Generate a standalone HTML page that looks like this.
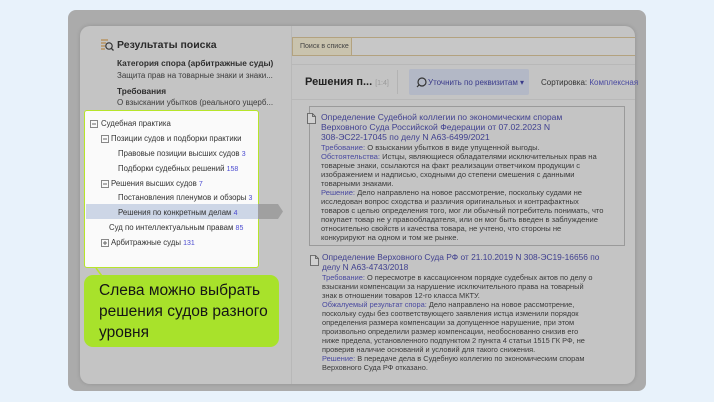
<!DOCTYPE html>
<html><head><meta charset="utf-8"><style>
*{margin:0;padding:0;box-sizing:border-box}
body{width:714px;height:402px;background:#e8f2fb;position:relative;overflow:hidden;font-family:"Liberation Sans",sans-serif}
.a{position:absolute;white-space:nowrap}
.ov{left:68px;top:10px;width:578px;height:381px;background:#ababab;border-radius:8px}
.win{left:80px;top:26px;width:555px;height:358px;background:#c4c4c4;border-radius:10px;box-shadow:0 0 4px rgba(0,0,0,.15)}
.s{font-size:7.8px;color:#3c3c3c}
.l{color:#4a4aa0}
.rt{color:#3a3a3a}
.t{font-size:8.6px;color:#3f3f8f;line-height:9.8px}
</style></head><body>
<div class="a ov"></div>
<div class="a win"></div>
<svg class="a" style="left:100px;top:38px" width="14" height="14"><g stroke="#b5894a" stroke-width="1.2"><line x1="1" y1="2" x2="8" y2="2"/><line x1="1" y1="5" x2="6" y2="5"/><line x1="1" y1="8" x2="5" y2="8"/><line x1="1" y1="11" x2="5" y2="11"/></g><circle cx="9" cy="8" r="3.2" fill="none" stroke="#333" stroke-width="1.2"/><line x1="11.3" y1="10.3" x2="13.5" y2="12.5" stroke="#333" stroke-width="1.3"/></svg>
<div class="a" style="left:117px;top:39px;font-size:10.5px;font-weight:bold;color:#2a2a2a">Результаты поиска</div>
<div class="a" style="left:117px;top:58px;font-size:8.3px;font-weight:bold;color:#2e2e2e">Категория спора (арбитражные суды)</div>
<div class="a s" style="left:117px;top:71px;font-size:8px">Защита прав на товарные знаки и знаки...</div>
<div class="a" style="left:117px;top:86px;font-size:8.3px;font-weight:bold;color:#2e2e2e">Требования</div>
<div class="a s" style="left:117px;top:98px;font-size:8px">О взыскании убытков (реального ущерб...</div>
<div class="a" style="left:84px;top:110px;width:175px;height:158px;background:#fafafa;border:1.5px solid #b7e52a;border-radius:3px"></div>
<div class="a" style="left:86px;top:204px;width:172px;height:15px;background:#cdd6e6"></div>
<svg class="a" style="left:258px;top:204px" width="26" height="15"><polygon points="0,0 20,0 25,7.5 20,15 0,15" fill="#a0a0a0"/></svg>
<svg class="a" style="left:90px;top:120px" width="8" height="8"><rect x=".5" y=".5" width="7" height="7" fill="none" stroke="#888"/><line x1="2" y1="4" x2="6" y2="4" stroke="#666"/></svg>
<div class="a s" style="left:101px;top:119px;color:#333">Судебная практика</div>
<svg class="a" style="left:101px;top:135px" width="8" height="8"><rect x=".5" y=".5" width="7" height="7" fill="none" stroke="#888"/><line x1="2" y1="4" x2="6" y2="4" stroke="#666"/></svg>
<div class="a s" style="left:111px;top:134px;color:#333">Позиции судов и подборки практики</div>
<div class="a s" style="left:118px;top:149px;color:#333">Правовые позиции высших судов <span style="color:#4b4bd0;font-size:7px">3</span></div>
<div class="a s" style="left:118px;top:164px;color:#333">Подборки судебных решений <span style="color:#4b4bd0;font-size:7px">158</span></div>
<svg class="a" style="left:101px;top:180px" width="8" height="8"><rect x=".5" y=".5" width="7" height="7" fill="none" stroke="#888"/><line x1="2" y1="4" x2="6" y2="4" stroke="#666"/></svg>
<div class="a s" style="left:111px;top:179px;color:#333">Решения высших судов <span style="color:#4b4bd0;font-size:7px">7</span></div>
<div class="a s" style="left:118px;top:193px;color:#333">Постановления пленумов и обзоры <span style="color:#4b4bd0;font-size:7px">3</span></div>
<div class="a s" style="left:118px;top:208px;color:#333">Решения по конкретным делам <span style="color:#4b4bd0;font-size:7px">4</span></div>
<div class="a s" style="left:109px;top:223px;color:#333">Суд по интеллектуальным правам <span style="color:#4b4bd0;font-size:7px">85</span></div>
<svg class="a" style="left:101px;top:239px" width="8" height="8"><rect x=".5" y=".5" width="7" height="7" fill="none" stroke="#888"/><line x1="2" y1="4" x2="6" y2="4" stroke="#666"/><line x1="4" y1="2" x2="4" y2="6" stroke="#666"/></svg>
<div class="a s" style="left:111px;top:238px;color:#333">Арбитражные суды <span style="color:#4b4bd0;font-size:7px">131</span></div>
<svg class="a" style="left:95px;top:268px" width="20" height="12"><line x1="1" y1="0" x2="10" y2="12" stroke="#b7e52a" stroke-width="1.5"/></svg>
<div class="a" style="left:84px;top:275px;width:195px;height:72px;background:#a8e22b;border-radius:9px"></div>
<div class="a" style="left:99px;top:280px;font-size:15.5px;line-height:21px;color:#151515">Слева можно выбрать<br>решения судов разного<br>уровня</div>
<div class="a" style="left:291px;top:26px;width:1px;height:358px;background:#b8b8b8"></div>
<div class="a" style="left:292px;top:37px;width:343px;height:19px;border-top:1px solid #b3a27f;border-bottom:1px solid #b3a27f;background:#c7c7c7"></div>
<div class="a" style="left:292px;top:37px;width:60px;height:19px;background:#c9c3ae;border:1px solid #b3a27f;font-size:7px;color:#444;padding:5px 0 0 7px">Поиск в списке</div>
<div class="a" style="left:292px;top:64px;width:343px;height:1px;background:#b8b8b8"></div>
<div class="a" style="left:292px;top:99px;width:343px;height:1px;background:#b8b8b8"></div>
<div class="a" style="left:305px;top:76px;font-size:11px;font-weight:bold;color:#222">Решения п... <span style="font-size:7px;font-weight:normal;color:#999">[1:4]</span></div>
<div class="a" style="left:397px;top:70px;width:1px;height:24px;background:#b3b3b3"></div>
<div class="a" style="left:409px;top:69px;width:120px;height:26px;background:#b3b8c6;border-radius:2px"></div>
<svg class="a" style="left:416px;top:77px" width="11" height="11"><circle cx="6" cy="5" r="4" fill="none" stroke="#333" stroke-width="1.2"/><line x1="3" y1="8" x2="1" y2="10" stroke="#333" stroke-width="1.2"/></svg>
<div class="a" style="left:428px;top:78px;font-size:8px;color:#3a3a8a">Уточнить по реквизитам ▾</div>
<div class="a" style="left:541px;top:78px;font-size:8px;color:#333">Сортировка: <span style="color:#4a4aa0">Комплексная</span></div>
<div class="a" style="left:309px;top:106px;width:316px;height:140px;border:1px solid #9a9a9a"></div>
<svg class="a" style="left:307px;top:113px" width="9" height="11"><path d="M.5 .5H5.5L8.5 3.5V10.5H.5Z M5.5 .5V3.5H8.5" fill="#d0d0d0" stroke="#555" stroke-width=".8"/></svg>
<div class="a t" style="left:321px;top:113px">Определение Судебной коллегии по экономическим спорам<br>Верховного Суда Российской Федерации от 07.02.2023 N<br>308-ЭС22-17045 по делу N А63-6499/2021</div>
<div class="a rt" style="left:321px;top:143px;font-size:7.6px;line-height:9px"><span class="l">Требование:</span> О взыскании убытков в виде упущенной выгоды.<br><span class="l">Обстоятельства:</span> Истцы, являющиеся обладателями исключительных прав на<br>товарные знаки, ссылаются на факт реализации ответчиком продукции с<br>изображением и надписью, сходными до степени смешения с данными<br>товарными знаками.<br><span class="l">Решение:</span> Дело направлено на новое рассмотрение, поскольку судами не<br>исследован вопрос сходства и различия оригинальных и контрафактных<br>товаров с целью определения того, мог ли обычный потребитель понимать, что<br>покупает товар не у правообладателя, или он мог быть введен в заблуждение<br>относительно свойств и качества товара, не учтено, что стороны не<br>конкурируют на одном и том же рынке.</div>
<svg class="a" style="left:310px;top:255px" width="9" height="11"><path d="M.5 .5H5.5L8.5 3.5V10.5H.5Z M5.5 .5V3.5H8.5" fill="#d0d0d0" stroke="#555" stroke-width=".8"/></svg>
<div class="a t" style="left:322px;top:253px;font-size:8.4px">Определение Верховного Суда РФ от 21.10.2019 N 308-ЭС19-16656 по<br>делу N А63-4743/2018</div>
<div class="a rt" style="left:322px;top:273px;font-size:7.4px;line-height:9px"><span class="l">Требование:</span> О пересмотре в кассационном порядке судебных актов по делу о<br>взыскании компенсации за нарушение исключительного права на товарный<br>знак в отношении товаров 12-го класса МКТУ.<br><span class="l">Обжалуемый результат спора:</span> Дело направлено на новое рассмотрение,<br>поскольку суды без соответствующего заявления истца изменили порядок<br>определения размера компенсации за допущенное нарушение, при этом<br>произвольно определили размер компенсации, необоснованно снизив его<br>ниже предела, установленного подпунктом 2 пункта 4 статьи 1515 ГК РФ, не<br>проверив наличие оснований и условий для такого снижения.<br><span class="l">Решение:</span> В передаче дела в Судебную коллегию по экономическим спорам<br>Верховного Суда РФ отказано.</div>
</body></html>
